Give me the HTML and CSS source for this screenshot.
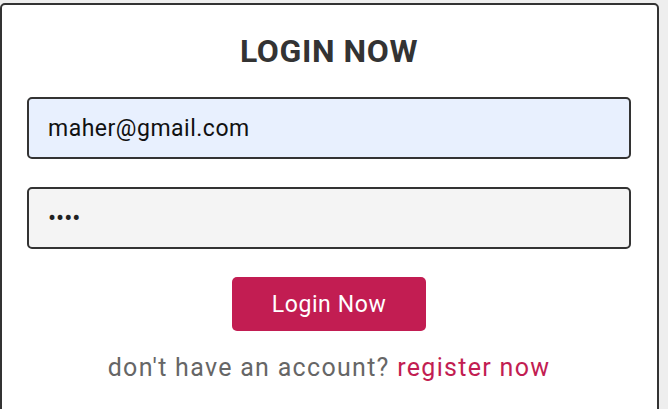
FILE: index.html
```html
<!DOCTYPE html>
<html lang="en">
<head>
<meta charset="utf-8">
<title>Login</title>
<link rel="stylesheet" href="styles.css">
</head>
<body>
<div class="page">
  <form class="card">
    <h3 class="title">LOGIN NOW</h3>
    <input class="field field-email" type="email" value="maher@gmail.com">
    <input class="field field-pass" type="password" value="1234">
    <button class="btn" type="button">Login Now</button>
    <p class="note">don't have an account? <a class="link" href="#">register now</a></p>
  </form>
</div>
</body>
</html>
```
FILE: styles.css
```css
* { box-sizing: border-box; }
html, body { margin: 0; padding: 0; }
body {
  background: #eeeeee;
  font-family: Roboto, "Liberation Sans", sans-serif;
  height: 409px;
  overflow: hidden;
}
.page {
  padding-top: 3px;
}
.card {
  width: 659px;
  height: 420px;
  background: #ffffff;
  border: 2px solid #333333;
  border-radius: 5px;
  padding: 0 26px 0 25px;
  display: flex;
  flex-direction: column;
  align-items: center;
}
.title {
  margin: 27px 0 0;
  font-size: 32px;
  line-height: 38px;
  font-weight: 700;
  color: #333333;
  letter-spacing: 0.6px;
}
.field {
  display: block;
  width: 100%;
  height: 62px;
  margin: 0;
  border: 2px solid #333333;
  border-radius: 5px;
  padding: 0 19px;
  font-family: Roboto, "Liberation Sans", sans-serif;
  font-size: 23px;
  color: #111111;
  outline: none;
}
.field-email {
  margin-top: 27px;
  background: #e8f0fe;
  letter-spacing: 0.5px;
}
.field-pass {
  margin-top: 28px;
  background: #f4f4f4;
  color: #222222;
  font-size: 24px;
}
.btn {
  margin-top: 28px;
  width: 194px;
  height: 54px;
  border: none;
  border-radius: 5px;
  background: #c21d52;
  color: #ffffff;
  font-family: Roboto, "Liberation Sans", sans-serif;
  font-size: 23px;
  letter-spacing: 0.6px;
  cursor: pointer;
}
.note {
  margin: 22px 0 0;
  font-size: 25px;
  line-height: 30px;
  color: #666666;
  letter-spacing: 1.3px;
}
.link {
  color: #c21d52;
  text-decoration: none;
}
```
